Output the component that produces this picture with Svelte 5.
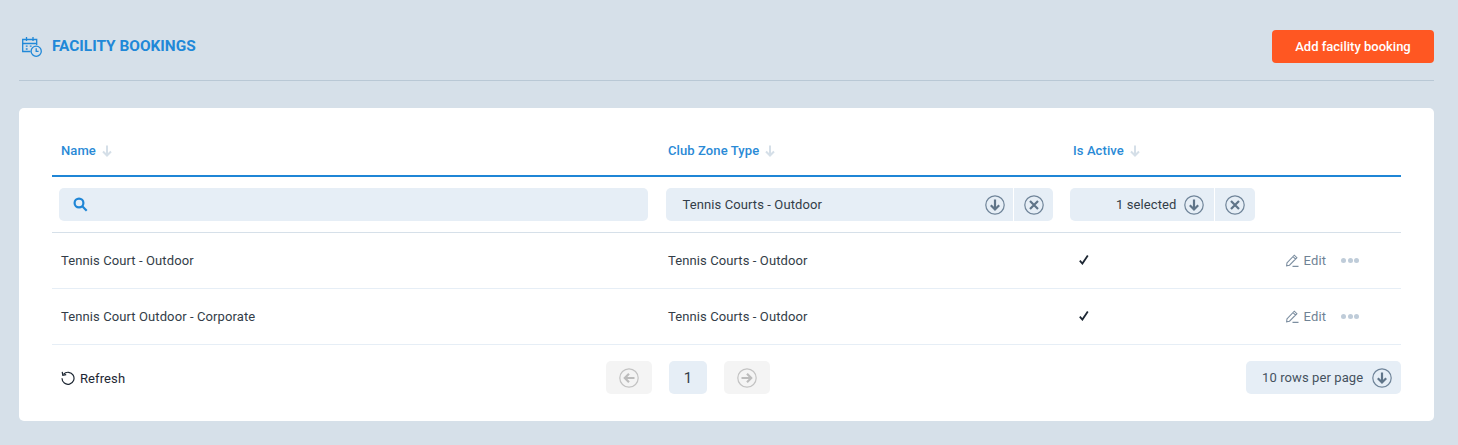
<script>
  const rows = [
    { name: "Tennis Court - Outdoor", zone: "Tennis Courts - Outdoor" },
    { name: "Tennis Court Outdoor - Corporate", zone: "Tennis Courts - Outdoor" }
  ];
</script>

{#snippet sortArrow()}
  <svg class="sort" width="10" height="12" viewBox="0 0 10 12" fill="none" stroke="#d5dfe8" stroke-width="2">
    <path d="M5 0.5v10M1 6.5l4 4 4-4" />
  </svg>
{/snippet}

{#snippet circleDown()}
  <svg width="20" height="20" viewBox="0 0 20 20" fill="none">
    <circle cx="10" cy="10" r="9.2" stroke="#6f8499" stroke-width="1.2" />
    <path d="M10 4.5v10M5.8 10.3l4.2 4.2 4.2-4.2" stroke="#5f7488" stroke-width="2.2" />
  </svg>
{/snippet}

{#snippet circleX()}
  <svg width="20" height="20" viewBox="0 0 20 20" fill="none">
    <circle cx="10" cy="10" r="9.2" stroke="#6f8499" stroke-width="1.2" />
    <path d="M6 6l8 8M14 6l-8 8" stroke="#5f7488" stroke-width="2.2" />
  </svg>
{/snippet}

<div class="page">
  <header class="top">
    <div class="title">
      <svg width="20" height="20" viewBox="0 0 20 20" fill="none" stroke="#2088d8" stroke-width="1.3">
        <path d="M8.5 14.5H0.7V2.5h14v5.5" />
        <path d="M0.7 6.5h14M4.5 0v4M11 0v4" />
        <path d="M3.8 9.2h1.8M3.8 12h1.8M7.8 9.2h1.8" />
        <circle cx="14.2" cy="14.2" r="5.1" />
        <path d="M14.2 11.2v3.2h2.4" />
      </svg>
      <h1>FACILITY BOOKINGS</h1>
    </div>
    <button class="add">Add facility booking</button>
  </header>

  <section class="card">
    <div class="row head">
      <div class="th">Name {@render sortArrow()}</div>
      <div class="th">Club Zone Type {@render sortArrow()}</div>
      <div class="th">Is Active {@render sortArrow()}</div>
    </div>

    <div class="row filters">
      <div class="search">
        <svg width="15" height="15" viewBox="0 0 15 15" fill="none" stroke="#1f86d6" stroke-width="2.2">
          <circle cx="6" cy="6" r="4.4" />
          <path d="M9.3 9.3l4.4 4.4" />
        </svg>
      </div>
      <div class="select zone">
        <span class="value">Tennis Courts - Outdoor</span>
        <span class="ico">{@render circleDown()}</span>
        <span class="ico clear">{@render circleX()}</span>
      </div>
      <div class="select active">
        <span class="value">1 selected</span>
        <span class="ico">{@render circleDown()}</span>
        <span class="ico clear">{@render circleX()}</span>
      </div>
    </div>

    {#each rows as row}
      <div class="row item">
        <div class="td">{row.name}</div>
        <div class="td">{row.zone}</div>
        <div class="td last">
          <svg class="check" width="10" height="10" viewBox="0 0 10 10" fill="none" stroke="#1d2733" stroke-width="1.8">
            <path d="M0.8 5.6l2.6 3L8.8 0.6" />
          </svg>
          <div class="actions">
            <span class="edit">
              <svg width="13" height="13" viewBox="0 0 13 13" fill="none" stroke="#7d8fa1" stroke-width="1.1">
                <path d="M1 8.8L8.3 1.2l2.6 2.5-7.4 7.5-2.9.6zM7 2.6l2.6 2.5M6.5 12.4h6" />
              </svg>
              Edit
            </span>
            <span class="dots"><i></i><i></i><i></i></span>
          </div>
        </div>
      </div>
    {/each}

    <footer class="foot">
      <div class="refresh">
        <svg width="14" height="14" viewBox="0 0 14 14" fill="none" stroke="#1d2733" stroke-width="1.2">
          <path d="M2.6 3.2A6 6 0 1 1 1 7.2" />
          <path d="M1.2 0.8l.6 3.4 3.4-.5" />
        </svg>
        Refresh
      </div>
      <div class="pager">
        <span class="nav">
          <svg width="20" height="20" viewBox="0 0 20 20" fill="none">
            <circle cx="10" cy="10" r="9.2" stroke="#c3c3c3" stroke-width="1.2" />
            <path d="M15.5 10h-10M10 5.8L5.8 10l4.2 4.2" stroke="#bcbcbc" stroke-width="2.2" />
          </svg>
        </span>
        <span class="num">1</span>
        <span class="nav">
          <svg width="20" height="20" viewBox="0 0 20 20" fill="none">
            <circle cx="10" cy="10" r="9.2" stroke="#c3c3c3" stroke-width="1.2" />
            <path d="M4.5 10h10M10 5.8l4.2 4.2-4.2 4.2" stroke="#bcbcbc" stroke-width="2.2" />
          </svg>
        </span>
      </div>
      <div class="perpage">
        <span>10 rows per page</span>
        {@render circleDown()}
      </div>
    </footer>
  </section>
</div>

<style>
  :global(body) {
    margin: 0;
    background: #d6e0e9;
    font-family: Roboto, "Liberation Sans", sans-serif;
  }

  .page {
    padding: 30px 24px 24px 19px;
  }

  .top {
    display: flex;
    justify-content: space-between;
    align-items: flex-start;
    height: 50px;
    border-bottom: 1px solid #b9c8d5;
    margin-bottom: 27px;
  }

  .title {
    display: flex;
    align-items: center;
    gap: 10px;
    height: 32px;
    padding-left: 3px;
  }

  .title svg {
    margin-top: 2px;
  }

  h1 {
    margin: 0;
    font-size: 15.4px;
    font-weight: 700;
    color: #2088d8;
  }

  .add {
    width: 162px;
    height: 33px;
    border: 0;
    border-radius: 4px;
    background: #ff5722;
    color: #fff;
    font: 500 13px Roboto, sans-serif;
  }

  .card {
    background: #fff;
    border-radius: 5px;
    height: 313px;
    padding: 0 33px;
    box-sizing: border-box;
    color: #333d48;
    font-size: 13px;
    letter-spacing: 0.1px;
  }

  .row {
    display: grid;
    grid-template-columns: 607px 405px 337px;
  }

  .head {
    height: 49px;
    padding-top: 18px;
    border-bottom: 2px solid #1f86d6;
    align-items: center;
  }

  .th {
    padding-left: 9px;
    font-weight: 500;
    color: #2a8ad6;
    display: flex;
    align-items: center;
    gap: 6px;
  }

  .sort {
    margin-top: 1px;
  }

  .filters {
    height: 55px;
    align-items: center;
    border-bottom: 1px solid #d6e0e9;
  }

  .search,
  .select {
    height: 33px;
    background: #e6eef6;
    border-radius: 5px;
    display: flex;
    align-items: center;
    box-sizing: border-box;
  }

  .search {
    margin: 0 11px 0 7px;
    padding-left: 14px;
  }

  .select {
    margin-left: 7px;
  }

  .zone {
    width: 387px;
  }

  .active {
    width: 185px;
    margin-left: 6px;
  }

  .value {
    flex: 1;
    min-width: 0;
    padding-left: 16.5px;
    white-space: nowrap;
  }

  .active .value {
    padding-left: 46px;
  }

  .ico {
    width: 36px;
    height: 33px;
    display: flex;
    align-items: center;
    justify-content: center;
    flex: none;
  }

  .active .ico {
    width: 40px;
  }

  .ico.clear {
    width: 40px;
    box-sizing: border-box;
    border-left: 1px solid #fff;
  }

  .active .ico.clear {
    width: 41px;
  }

  .item {
    height: 55px;
    align-items: center;
    border-bottom: 1px solid #e6eef6;
  }

  .td {
    padding-left: 9px;
  }

  .last {
    display: flex;
    align-items: center;
    justify-content: space-between;
    padding-left: 15px;
    padding-right: 42px;
  }

  .check {
    margin-top: -1px;
  }

  .actions {
    display: flex;
    align-items: center;
    gap: 15px;
  }

  .edit {
    display: flex;
    align-items: center;
    gap: 5px;
    color: #6f8295;
  }

  .dots {
    display: flex;
    gap: 1.5px;
  }

  .dots i {
    width: 5px;
    height: 5px;
    border-radius: 50%;
    background: #bfccd9;
  }

  .foot {
    display: grid;
    grid-template-columns: 1fr auto 1fr;
    align-items: center;
    height: 65px;
    padding-left: 9px;
  }

  .refresh {
    display: flex;
    align-items: center;
    gap: 5px;
    padding-top: 1px;
    color: #1d2733;
  }

  .pager {
    display: flex;
    gap: 17px;
    margin-left: -86px;
  }

  .nav,
  .num {
    height: 33px;
    border-radius: 5px;
    display: flex;
    align-items: center;
    justify-content: center;
  }

  .nav {
    width: 46px;
    background: #f4f4f4;
  }

  .num {
    width: 38px;
    background: #e6eef6;
    font-size: 15px;
  }

  .perpage {
    justify-self: end;
    width: 155px;
    height: 33px;
    background: #e6eef6;
    border-radius: 5px;
    display: flex;
    align-items: center;
    justify-content: space-between;
    padding: 0 9px 0 16px;
    box-sizing: border-box;
    color: #45525f;
  }
</style>
